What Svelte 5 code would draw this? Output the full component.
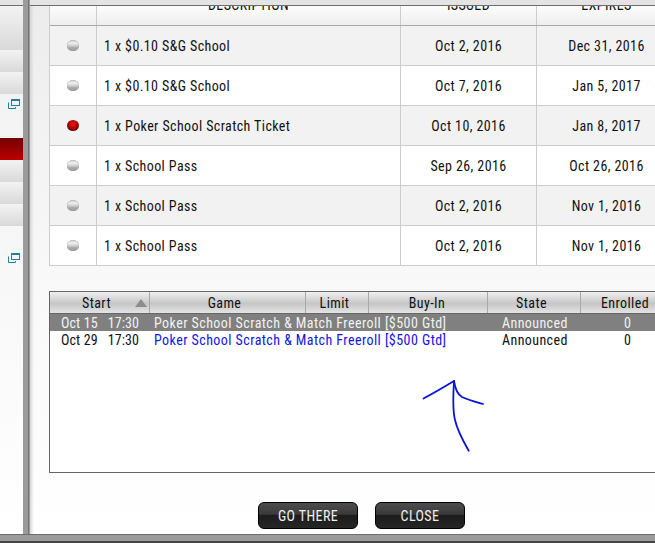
<script>
	const coupons = [
		{ desc: '1 x $0.10 S&G School', issued: 'Oct 2, 2016', expires: 'Dec 31, 2016' },
		{ desc: '1 x $0.10 S&G School', issued: 'Oct 7, 2016', expires: 'Jan 5, 2017' },
		{ desc: '1 x Poker School Scratch Ticket', issued: 'Oct 10, 2016', expires: 'Jan 8, 2017', active: true },
		{ desc: '1 x School Pass', issued: 'Sep 26, 2016', expires: 'Oct 26, 2016' },
		{ desc: '1 x School Pass', issued: 'Oct 2, 2016', expires: 'Nov 1, 2016' },
		{ desc: '1 x School Pass', issued: 'Oct 2, 2016', expires: 'Nov 1, 2016' }
	]
	const games = [
		{ start: 'Oct 15', time: '17:30', selected: true },
		{ start: 'Oct 29', time: '17:30', link: true }
	]
	const sideRows = [
		{ kind: 'grey tall' },
		{ kind: 'grey' },
		{ kind: 'grey' },
		{ kind: 'plain tall', icon: true },
		{ kind: 'red' },
		{ kind: 'grey' },
		{ kind: 'grey' },
		{ kind: 'grey' },
		{ kind: 'plain rest', icon: true }
	]
</script>

<div class="window">
	<div class="main">
		<aside class="side">
			<div class="top"></div>
			{#each sideRows as row}
				<div class="side-row {row.kind}">
					{#if row.icon}
						<svg width="12" height="11" viewBox="0 0 12 11" fill="none" stroke="#1b8496" stroke-width="1">
							<rect x="3.5" y="0.5" width="8" height="6" />
							<path d="M4 1.5 H11" />
							<path d="M0.5 3.5 V9.5 H7.5 V8" />
						</svg>
					{/if}
				</div>
			{/each}
		</aside>
		<div class="divider"></div>
		<section class="panel">
			<div class="top"></div>
			<div class="content">
				<div class="coupons">
					<div class="c-row c-head">
						<div class="c-dot"></div>
						<div class="c-desc"><span class="cut">DESCRIPTION</span></div>
						<div class="c-date"><span class="cut">ISSUED</span></div>
						<div class="c-date last"><span class="cut">EXPIRES</span></div>
					</div>
					{#each coupons as c}
						<div class="c-row body">
							<div class="c-dot"><span class="led" class:on={c.active}></span></div>
							<div class="c-desc">{c.desc}</div>
							<div class="c-date">{c.issued}</div>
							<div class="c-date last">{c.expires}</div>
						</div>
					{/each}
				</div>

				<div class="games">
					<div class="g-row g-head">
						<div class="start">Start<span class="sort"></span></div>
						<div class="game">Game</div>
						<div class="limit">Limit</div>
						<div class="buyin">Buy-In</div>
						<div class="state">State</div>
						<div class="enrolled">Enrolled</div>
					</div>
					{#each games as g}
						<div class="g-row item" class:selected={g.selected}>
							<div class="when"><span>{g.start}</span><span>{g.time}</span></div>
							<div class="title" class:link={g.link}>Poker School Scratch &amp; Match Freeroll [$500 Gtd]</div>
							<div class="state">Announced</div>
							<div class="enrolled">0</div>
						</div>
					{/each}
					<svg class="arrow" width="70" height="80" viewBox="0 0 70 80" fill="none" stroke="#0a14d8" stroke-width="1.8" stroke-linecap="round" stroke-linejoin="round">
						<path d="M1.5 21.5 C10 17 22 10 32 4 C33 11 35 17 40 20 C46 23 54 25 61 27" />
						<path d="M32 4 C31 20 31 35 33 43 C35 52 40 62 46.7 73.7" />
					</svg>
				</div>

				<div class="actions">
					<button>GO THERE</button>
					<button class="close">CLOSE</button>
				</div>
			</div>
		</section>
	</div>
	<div class="bottom"></div>
</div>

<style>
	:global(body) {
		margin: 0;
		background: #fff;
	}
	.window {
		width: 655px;
		height: 543px;
		overflow: hidden;
		font-family: 'Roboto', sans-serif;
		font-stretch: 75%;
		font-size: 14px;
		letter-spacing: 0.4px;
		color: #111;
		display: flex;
		flex-direction: column;
	}
	.main {
		display: flex;
		height: 534px;
	}
	.side {
		width: 23px;
		flex: none;
		background: linear-gradient(#f0f0f0, #fff);
	}
	.side-row {
		height: 22px;
		display: flex;
		align-items: center;
		justify-content: flex-end;
		padding-right: 3px;
		box-sizing: border-box;
	}
	.side-row.tall {
		height: 44px;
		align-items: flex-start;
		padding-top: 5px;
	}
	.side-row.rest {
		height: 60px;
		align-items: flex-start;
		padding-top: 27px;
	}
	.side-row.grey {
		background: linear-gradient(#f3f3f3, #d9d9d9);
	}
	.side-row.red {
		background: linear-gradient(#760000, #bb0000);
	}
	.divider {
		width: 7px;
		flex: none;
		background: linear-gradient(90deg, #9b9b9b 0 5px, #757575 5px 6px, #9b9b9b 6px);
	}
	.panel {
		flex: 1;
		min-width: 0;
		background: linear-gradient(90deg, #d6d6d6, transparent 4px), linear-gradient(#ececec, #f8f8f8 50%, #fff);
	}
	.top {
		height: 6px;
		box-sizing: border-box;
		background: #e4e4e4;
		border-bottom: 1px solid #6e6e6e;
	}
	.content {
		padding-left: 19px;
	}
	.coupons {
		width: 640px;
		overflow: hidden;
		border-left: 1px solid #ccc;
		box-sizing: border-box;
		background: #fff;
	}
	.c-row {
		display: flex;
		height: 40px;
		box-sizing: border-box;
		border-bottom: 1px solid #ccc;
	}
	.c-row > div {
		flex: none;
		display: flex;
		align-items: center;
		justify-content: center;
		box-sizing: border-box;
		border-right: 1px solid #ccc;
	}
	.c-head {
		height: 20px;
		background: linear-gradient(#fdfdfd, #eeeeee);
		border-bottom: 1px solid #a8a8a8;
	}
	.c-head > div {
		overflow: hidden;
		align-items: flex-start;
	}
	.cut {
		display: block;
		margin-top: -9px;
	}
	.body:nth-child(even) {
		background: #f2f2f2;
	}
	.c-dot {
		width: 47px;
	}
	.c-row .c-desc {
		width: 304px;
	}
	.body .c-desc {
		justify-content: flex-start;
		padding-left: 7px;
	}
	.c-date {
		width: 136px;
	}
	.c-row .last {
		width: 139px;
		border-right: 0;
	}
	.c-row .c-dot {
		padding-right: 1px;
	}
	.led {
		width: 12px;
		height: 11px;
		border-radius: 50%;
		background: linear-gradient(#c4c4c4, #f0f0f0 25%, #dcdcdc 45%, #ababab 70%, #9c9c9c);
		box-shadow: inset 0 0 1px #777;
	}
	.led.on {
		background: radial-gradient(circle at 50% 38%, #e01010 0 18%, #a30000 50%, #3a0000 90%);
		box-shadow: none;
	}
	.games {
		position: relative;
		margin-top: 25px;
		width: 640px;
		height: 182px;
		box-sizing: border-box;
		border: 1px solid #666;
		border-right: 0;
		background: #fff;
	}
	.g-row {
		display: flex;
		height: 17px;
		line-height: 19px;
		white-space: nowrap;
	}
	.g-head {
		height: 22px;
		line-height: 23px;
		background: linear-gradient(#f0f0f0, #c6c6c6 55%, #e4e4e4);
		border-bottom: 1px solid #666;
		box-sizing: border-box;
	}
	.g-head > div {
		flex: none;
		box-sizing: border-box;
		text-align: center;
		border-right: 1px solid #a9a9a9;
		position: relative;
	}
	.start {
		width: 100px;
		padding-right: 6px;
	}
	.sort {
		position: absolute;
		right: 2px;
		top: 7px;
		border: 6px solid transparent;
		border-top: 0;
		border-bottom: 8px solid #8c8c8c;
	}
	.game {
		width: 156px;
		padding-right: 6px;
	}
	.limit {
		width: 63px;
		padding-right: 5px;
	}
	.buyin {
		width: 119px;
		padding-right: 2px;
	}
	.g-head .state {
		width: 93px;
		padding-right: 5px;
	}
	.g-head .enrolled {
		width: 100px;
		border-right: 0;
		padding-right: 12px;
	}
	.item.selected {
		background: #808080;
		color: #f2f2f2;
	}
	.when {
		flex: none;
		width: 100px;
		padding-left: 11px;
		box-sizing: border-box;
		display: flex;
		gap: 10px;
		letter-spacing: 0.1px;
	}
	.title {
		flex: none;
		width: 348px;
		padding-left: 4px;
		box-sizing: border-box;
		letter-spacing: 0.44px;
	}
	.title.link {
		color: #1414e6;
	}
	.item .state {
		flex: none;
		width: 120px;
		padding-left: 4px;
		box-sizing: border-box;
	}
	.item .enrolled {
		flex: none;
		width: 20px;
		padding-left: 6px;
	}
	.arrow {
		position: absolute;
		left: 372px;
		top: 85px;
	}
	.actions {
		display: flex;
		gap: 17px;
		margin-top: 29px;
		padding-left: 209px;
	}
	button {
		width: 100px;
		height: 27px;
		border: 1px solid #000;
		border-radius: 6px;
		background: linear-gradient(#4c4c4c, #3a3a3a 45%, #1c1c1c 50%, #262626);
		color: #f0f0f0;
		font: inherit;
		letter-spacing: 0.4px;
		padding: 0;
	}
	.close {
		width: 90px;
	}
	.bottom {
		height: 9px;
		background: linear-gradient(#6e6e6e 0 1px, #9b9b9b 1px 7px, #444 7px);
	}
</style>
